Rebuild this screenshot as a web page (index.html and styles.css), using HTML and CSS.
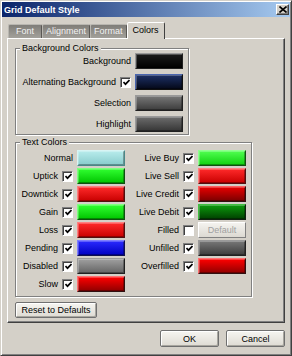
FILE: index.html
```html
<!DOCTYPE html>
<html>
<head>
<meta charset="utf-8">
<link rel="stylesheet" href="styles.css">
</head>
<body>
<div class="window">
  <div class="titlebar">
    <span class="title">Grid Default Style</span>
    <span class="close"><svg width="8" height="7" viewBox="0 0 8 7"><path d="M0.5 0.5 L7.5 6.5 M7.5 0.5 L0.5 6.5" stroke="#000" stroke-width="1.6"/></svg></span>
  </div>
  <div class="content">
    <div class="tabs">
      <div class="tab tab-first">Font</div>
      <div class="tab">Alignment</div>
      <div class="tab">Format</div>
      <div class="tab active">Colors</div>
    </div>
    <div class="panel">
      <fieldset class="group bg-group">
        <legend>Background Colors</legend>
        <div class="bg-grid">
          <span class="lbl wide">Background</span><span class="sw c-black"></span>
          <span class="lbl">Alternating Background</span><span class="cb"><svg width="7" height="7" viewBox="0 0 7 7"><polyline points="0.5,3 2.5,5.2 6.5,1" fill="none" stroke="#000" stroke-width="1.7"/></svg></span><span class="sw c-navy"></span>
          <span class="lbl wide">Selection</span><span class="sw c-grey"></span>
          <span class="lbl wide">Highlight</span><span class="sw c-grey2"></span>
        </div>
      </fieldset>
      <fieldset class="group text-group">
        <legend>Text Colors</legend>
        <div class="tx-grid">
          <span class="lbl wide">Normal</span><span class="sw c-cyan"></span>
          <span class="lbl">Live Buy</span><span class="cb"><svg width="7" height="7" viewBox="0 0 7 7"><polyline points="0.5,3 2.5,5.2 6.5,1" fill="none" stroke="#000" stroke-width="1.7"/></svg></span><span class="sw c-lime"></span>

          <span class="lbl">Uptick</span><span class="cb"><svg width="7" height="7" viewBox="0 0 7 7"><polyline points="0.5,3 2.5,5.2 6.5,1" fill="none" stroke="#000" stroke-width="1.7"/></svg></span><span class="sw c-green"></span>
          <span class="lbl">Live Sell</span><span class="cb"><svg width="7" height="7" viewBox="0 0 7 7"><polyline points="0.5,3 2.5,5.2 6.5,1" fill="none" stroke="#000" stroke-width="1.7"/></svg></span><span class="sw c-red"></span>

          <span class="lbl">Downtick</span><span class="cb"><svg width="7" height="7" viewBox="0 0 7 7"><polyline points="0.5,3 2.5,5.2 6.5,1" fill="none" stroke="#000" stroke-width="1.7"/></svg></span><span class="sw c-red"></span>
          <span class="lbl">Live Credit</span><span class="cb"><svg width="7" height="7" viewBox="0 0 7 7"><polyline points="0.5,3 2.5,5.2 6.5,1" fill="none" stroke="#000" stroke-width="1.7"/></svg></span><span class="sw c-darkred"></span>

          <span class="lbl">Gain</span><span class="cb"><svg width="7" height="7" viewBox="0 0 7 7"><polyline points="0.5,3 2.5,5.2 6.5,1" fill="none" stroke="#000" stroke-width="1.7"/></svg></span><span class="sw c-green"></span>
          <span class="lbl">Live Debit</span><span class="cb"><svg width="7" height="7" viewBox="0 0 7 7"><polyline points="0.5,3 2.5,5.2 6.5,1" fill="none" stroke="#000" stroke-width="1.7"/></svg></span><span class="sw c-darkgreen"></span>

          <span class="lbl">Loss</span><span class="cb"><svg width="7" height="7" viewBox="0 0 7 7"><polyline points="0.5,3 2.5,5.2 6.5,1" fill="none" stroke="#000" stroke-width="1.7"/></svg></span><span class="sw c-red"></span>
          <span class="lbl">Filled</span><span class="cb"></span><span class="sw default">Default</span>

          <span class="lbl">Pending</span><span class="cb"><svg width="7" height="7" viewBox="0 0 7 7"><polyline points="0.5,3 2.5,5.2 6.5,1" fill="none" stroke="#000" stroke-width="1.7"/></svg></span><span class="sw c-blue"></span>
          <span class="lbl">Unfilled</span><span class="cb"><svg width="7" height="7" viewBox="0 0 7 7"><polyline points="0.5,3 2.5,5.2 6.5,1" fill="none" stroke="#000" stroke-width="1.7"/></svg></span><span class="sw c-grey"></span>

          <span class="lbl">Disabled</span><span class="cb"><svg width="7" height="7" viewBox="0 0 7 7"><polyline points="0.5,3 2.5,5.2 6.5,1" fill="none" stroke="#000" stroke-width="1.7"/></svg></span><span class="sw c-silver"></span>
          <span class="lbl">Overfilled</span><span class="cb"><svg width="7" height="7" viewBox="0 0 7 7"><polyline points="0.5,3 2.5,5.2 6.5,1" fill="none" stroke="#000" stroke-width="1.7"/></svg></span><span class="sw c-darkred2"></span>

          <span class="lbl">Slow</span><span class="cb"><svg width="7" height="7" viewBox="0 0 7 7"><polyline points="0.5,3 2.5,5.2 6.5,1" fill="none" stroke="#000" stroke-width="1.7"/></svg></span><span class="sw c-darkred2"></span>
        </div>
      </fieldset>
      <button class="btn reset">Reset to Defaults</button>
    </div>
    <div class="actions">
      <button class="btn action">OK</button>
      <button class="btn action">Cancel</button>
    </div>
  </div>
</div>
</body>
</html>
```
FILE: styles.css
```css
html, body {
  margin: 0;
  padding: 0;
  background: #d4d0c8;
}
body {
  font-family: "Liberation Sans", Arial, sans-serif;
  font-size: 9px;
  color: #000;
}
.window {
  width: 292px;
  height: 356px;
  box-sizing: border-box;
  border: 1px solid;
  border-color: #d4d0c8 #404040 #404040 #d4d0c8;
  box-shadow: inset 1px 1px 0 #fff, inset -1px -1px 0 #808080;
  padding: 1px;
  background: #d4d0c8;
}
.titlebar {
  height: 15px;
  display: flex;
  align-items: center;
  justify-content: space-between;
  padding: 0 1px 0 2px;
  background: linear-gradient(to right, #0a246a, #a6caf0);
}
.title {
  color: #fff;
  font-weight: bold;
  font-size: 9px;
}
.close {
  width: 13px;
  height: 11px;
  box-sizing: border-box;
  background: #d4d0c8;
  border: 1px solid;
  border-color: #fff #404040 #404040 #fff;
  box-shadow: inset -1px -1px 0 #808080;
  display: flex;
  align-items: center;
  justify-content: center;
}
.close svg { display: block; }
.content {
  padding: 5px 5px 0 5px;
}
.tabs {
  display: flex;
  align-items: flex-end;
  height: 16px;
  padding-left: 1px;
}
.tab {
  height: 14px;
  box-sizing: border-box;
  line-height: 13px;
  padding: 0 3px;
  color: #f2f2f2;
  background: linear-gradient(#7f7d78, #a3a19b);
  border: 1px solid;
  border-color: #b8b6b0 #5a5854 transparent #b8b6b0;
  border-bottom: none;
  border-radius: 2px 2px 0 0;
}
.tab.tab-first { padding: 0 7px; }
.tab.active {
  height: 17px;
  margin-bottom: -1px;
  padding: 0 5px;
  line-height: 15px;
  color: #000;
  background: #d4d0c8;
  border-color: #fff #404040 transparent #fff;
  position: relative;
  z-index: 1;
}
.panel {
  border: 1px solid;
  border-color: #fff #404040 #404040 #fff;
  box-shadow: inset -1px -1px 0 #808080;
  padding: 4px 7px 5px 7px;
  height: 285px;
  box-sizing: border-box;
}
.group {
  margin: 0;
  padding: 0;
  min-width: 0;
  border: 1px solid #808080;
  box-shadow: inset 1px 1px 0 #fff, 1px 1px 0 #fff;
}
.group legend {
  margin-left: 4px;
  padding: 0 2px;
  line-height: 10px;
  background: #d4d0c8;
}
.bg-group {
  width: 174px;
  box-sizing: border-box;
  padding: 0 5px 2px 0;
}
.bg-grid {
  display: grid;
  grid-template-columns: 1fr 11px 48px;
  grid-auto-rows: 16px;
  column-gap: 4px;
  row-gap: 5px;
  align-items: center;
}
.text-group {
  width: 237px;
  box-sizing: border-box;
  margin-top: 2px;
  padding: 3px 5px 4px 0;
}
.tx-grid {
  display: grid;
  grid-template-columns: 42px 11px 48px 1fr 11px 48px;
  grid-auto-rows: 16px;
  column-gap: 4px;
  row-gap: 2px;
  align-items: center;
}
.lbl {
  text-align: right;
  white-space: nowrap;
}
.lbl.wide { grid-column: span 2; }
.cb {
  width: 11px;
  height: 11px;
  box-sizing: border-box;
  background: #fff;
  border: 1px solid;
  border-color: #808080 #fff #fff #808080;
  box-shadow: inset 1px 1px 0 #404040;
  display: flex;
  align-items: center;
  justify-content: center;
  padding: 1px 0 0 1px;
}
.cb svg { display: block; }
.sw {
  height: 16px;
  box-sizing: border-box;
  border: 1px solid #3a3a3a;
  border-color: #9a9a9a #202020 #202020 #9a9a9a;
  box-shadow: inset 1px 1px 0 rgba(255,255,255,0.25), inset -1px -1px 0 rgba(0,0,0,0.3);
}
.c-black { background: linear-gradient(#1c1c1c, #000); }
.c-navy { background: linear-gradient(#1d3166, #040818); border-color: #4a66b0 #101010 #101010 #4a66b0; }
.c-grey { background: linear-gradient(#787878, #3c3c3c); }
.c-grey2 { background: linear-gradient(#6c6c6c, #363636); }
.c-cyan { background: linear-gradient(#b8ecec, #88cccc); border-color: #d8f4f4 #4a8888 #4a8888 #d8f4f4; }
.c-green { background: linear-gradient(#30ff30, #00c400); border-color: #80ff80 #105010 #105010 #80ff80; }
.c-lime { background: linear-gradient(#50ff50, #10d010); border-color: #90ff90 #105010 #105010 #90ff90; }
.c-red { background: linear-gradient(#ff2a2a, #c80000); border-color: #ff8080 #501010 #501010 #ff8080; }
.c-darkred { background: linear-gradient(#e80000, #7a0000); border-color: #ff6060 #301010 #301010 #ff6060; }
.c-darkred2 { background: linear-gradient(#ff0000, #900000); border-color: #ff7070 #301010 #301010 #ff7070; }
.c-darkgreen { background: linear-gradient(#0c9a0c, #004000); border-color: #40c040 #102010 #102010 #40c040; }
.c-blue { background: linear-gradient(#2a2aff, #0000c0); border-color: #8080ff #101050 #101050 #8080ff; }
.c-silver { background: linear-gradient(#a0a0a0, #646464); }
.sw.default {
  background: linear-gradient(#f4f3ef, #dcd9d2);
  border-color: #fff #808080 #808080 #fff;
  box-shadow: none;
  color: #a0a0a0;
  text-align: center;
  line-height: 14px;
}
.btn {
  font-family: "Liberation Sans", Arial, sans-serif;
  font-size: 9px;
  color: #000;
  padding: 0;
  margin: 0;
  box-sizing: border-box;
  background: linear-gradient(#f6f5f1, #dedbd3);
  border: 1px solid #707070;
  border-radius: 2px;
  box-shadow: inset 1px 1px 0 #fff, inset -1px -1px 0 #a8a69f;
}
.reset {
  display: block;
  margin-top: 5px;
  width: 82px;
  height: 16px;
}
.actions {
  display: flex;
  justify-content: flex-end;
  gap: 7px;
  margin-top: 7px;
}
.action {
  width: 59px;
  height: 17px;
}
```
